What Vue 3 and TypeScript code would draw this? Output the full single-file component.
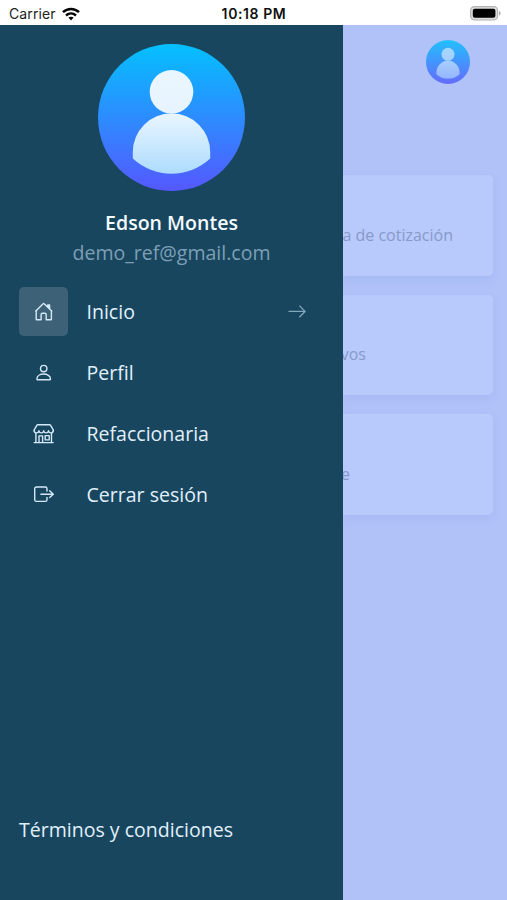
<script setup lang="ts">
interface MenuItem {
  icon: 'home' | 'person' | 'store' | 'exit'
  label: string
  active?: boolean
}

const menu: MenuItem[] = [
  { icon: 'home', label: 'Inicio', active: true },
  { icon: 'person', label: 'Perfil' },
  { icon: 'store', label: 'Refaccionaria' },
  { icon: 'exit', label: 'Cerrar sesión' },
]

const cards = [
  { key: 'quote', text: 'a de cotización' },
  { key: 'active-orders', text: 'vos' },
  { key: 'last', text: 'e' },
]
</script>

<template>
  <div class="screen">
    <header class="status">
      <div class="carrier">
        <span>Carrier</span>
        <svg class="wifi" viewBox="0 0 18 14" fill="none" stroke="#050505" stroke-width="2.5">
          <path d="M1 5.1C5.5.8 12.5.8 17 5.1" />
          <path d="M4 8.5c2.9-2.6 7.1-2.6 10 0" />
          <path d="M6.4 10.6c1.5-1.3 3.7-1.3 5.2 0L9 13.4z" fill="#050505" stroke="none" />
        </svg>
      </div>
      <span class="clock">10:18 PM</span>
      <svg class="battery" viewBox="0 0 31 15">
        <rect x=".6" y=".6" width="27" height="13.4" rx="4" fill="#ddd" stroke="#b4b4b4" stroke-width="1.2" />
        <rect x="2.8" y="2.8" width="22.6" height="9" rx="2" fill="#000" />
        <path d="M29 5c2.1.8 2.1 3.8 0 4.6z" fill="#aaa" />
      </svg>
    </header>

    <div class="body">
      <aside class="drawer">
        <svg class="avatar" viewBox="0 0 147 147">
          <defs>
            <linearGradient id="disc" x1="0" y1="0" x2="0" y2="1">
              <stop offset="0" stop-color="#04c0ff" />
              <stop offset="1" stop-color="#5558ff" />
            </linearGradient>
            <linearGradient id="figure" x1="0" y1="26" x2="0" y2="130" gradientUnits="userSpaceOnUse">
              <stop offset="0" stop-color="#eaf6ff" />
              <stop offset=".45" stop-color="#e6f4ff" />
              <stop offset="1" stop-color="#addcff" />
            </linearGradient>
          </defs>
          <circle cx="73.5" cy="73.5" r="73.5" fill="url(#disc)" />
          <circle cx="73.5" cy="47.8" r="21.8" fill="url(#figure)" />
          <path d="M34.8 108a38.7 38.7 0 0 1 77.4 0v6.6a57 57 0 0 1-77.4 0z" fill="url(#figure)" />
        </svg>
        <div class="name"><span>Edson Montes</span></div>
        <div class="email"><span>demo_ref@gmail.com</span></div>

        <nav class="menu">
          <div v-for="item in menu" :key="item.icon" class="item">
            <div class="tile" :class="{ active: item.active }">
              <svg class="icon" viewBox="0.3 -0.4 22 22">
                <g v-if="item.icon === 'home'">
                  <path d="M3.5 10.3v8.5a.6.6 0 0 0 .6.6h4.3v-5.2a1.4 1.4 0 0 1 1.4-1.4h2.3a1.4 1.4 0 0 1 1.4 1.4v5.2h4.6a.6.6 0 0 0 .6-.6v-8.5" />
                  <path d="M3.2 10.6l7-7.1a1 1 0 0 1 1.5 0l7.3 7.1" />
                  <path d="M15 4.6h1.9v3.5L15 6.3z" fill="#d3e9f7" />
                </g>
                <g v-else-if="item.icon === 'person'">
                  <circle cx="11" cy="7.2" r="3.2" />
                  <path d="M4.2 17.6c0-6.6 13.6-6.6 13.6 0 0 .5-.3.8-.8.8H5c-.5 0-.8-.3-.8-.8z" />
                </g>
                <g v-else-if="item.icon === 'store'">
                  <path d="M5.2 2.3h11.6q.7 0 1.1.6l2.7 4.6v1.2M5.2 2.3q-.7 0-1.1.6L1.5 7.5v1.2" />
                  <path d="M1.5 8.4c.4 2.8 4.1 2.8 4.7 0 .6 2.8 4.2 2.8 4.8 0 .6 2.8 4.2 2.8 4.8 0 .6 2.8 4.3 2.8 4.7 0" />
                  <path d="M3.2 11v9M18.8 11v9M1.5 20.2h19M6.3 20v-6.5h3.6V20M12.5 13.2h4v4.3h-4z" />
                </g>
                <g v-else>
                  <path d="M14.3 7.6V5.3a1.7 1.7 0 0 0-1.7-1.7H3.7A1.7 1.7 0 0 0 2 5.3v11a1.7 1.7 0 0 0 1.7 1.7h8.9a1.7 1.7 0 0 0 1.7-1.7V14" />
                  <path d="M8.2 10.8h12.2M17 7.4l3.6 3.4-3.6 3.4" />
                </g>
              </svg>
            </div>
            <span class="label">{{ item.label }}</span>
            <svg v-if="item.active" class="arrow" viewBox="0 -0.4 18 14">
              <path d="M.5 7h16.6M11.3 1.2L17.1 7l-5.8 5.8" />
            </svg>
          </div>
        </nav>

        <footer class="terms">Términos y condiciones</footer>
      </aside>

      <main class="page">
        <svg class="avatar-small" viewBox="0 0 147 147">
          <circle cx="73.5" cy="73.5" r="73.5" fill="url(#disc)" />
          <g opacity=".66">
            <circle cx="73.5" cy="47.8" r="21.8" fill="url(#figure)" />
            <path d="M34.8 108a38.7 38.7 0 0 1 77.4 0v6.6a57 57 0 0 1-77.4 0z" fill="url(#figure)" />
          </g>
        </svg>
        <section v-for="card in cards" :key="card.key" class="card" :class="card.key">
          <span>{{ card.text }}</span>
        </section>
      </main>
    </div>
  </div>
</template>

<style>
body {
  margin: 0;
  overflow: hidden;
}
</style>

<style scoped>
.screen {
  display: flex;
  flex-direction: column;
  width: 507px;
  height: 900px;
  overflow: hidden;
  background: #fff;
  font-family: 'Open Sans', 'Noto Sans', sans-serif;
}
.status {
  display: grid;
  grid-template-columns: 1fr auto 1fr;
  align-items: center;
  box-sizing: border-box;
  height: 25px;
  padding: 2px 6px 0 9px;
  color: #222;
  font: 14px/20px Inter, sans-serif;
}
.carrier {
  display: flex;
  align-items: center;
  gap: 6px;
  letter-spacing: 0.1px;
}
.wifi {
  width: 18px;
  height: 14px;
}
.clock {
  margin-right: 2px;
  color: #111;
  font-weight: 600;
  letter-spacing: 0.6px;
}
.battery {
  justify-self: end;
  width: 31px;
  height: 15px;
}
.body {
  display: flex;
  flex: 1;
  min-height: 0;
}
.drawer {
  display: flex;
  flex-direction: column;
  box-sizing: border-box;
  width: 343px;
  padding: 18.5px 19px 0;
  background: #19465f;
  color: #e0f0fb;
  font-size: 19.55px;
  line-height: 30px;
}
.avatar {
  align-self: center;
  flex: none;
  width: 147px;
  height: 147px;
}
.name,
.email {
  text-align: center;
}
.name {
  margin-top: 17.5px;
  color: #f4fbff;
  font-weight: 600;
}
.email {
  color: #7c9fb5;
}
.menu {
  display: grid;
  gap: 12px;
  margin-top: 18.7px;
}
.item {
  display: flex;
  align-items: center;
  height: 49px;
}
.tile {
  display: grid;
  place-items: center;
  width: 49px;
  height: 49px;
  margin-right: 18.5px;
  border-radius: 5px;
}
.tile.active {
  background: #3d6176;
}
.icon {
  width: 22px;
  height: 22px;
  fill: none;
  stroke: #d3e9f7;
  stroke-width: 1.4;
  stroke-linecap: round;
  stroke-linejoin: round;
}
.label {
  flex: 1;
  padding-top: 1px;
}
.arrow {
  width: 18px;
  height: 14px;
  margin-right: 18px;
  fill: none;
  stroke: #83a6b8;
  stroke-width: 1.3;
}
.terms {
  margin-top: auto;
  padding-bottom: 55.5px;
}
.page {
  display: flex;
  flex: 1;
  flex-direction: column;
  gap: 19px;
  min-width: 0;
  overflow: hidden;
  padding-right: 14.5px;
  background: #b0c2f8;
}
.avatar-small {
  align-self: flex-end;
  flex: none;
  width: 44px;
  height: 44px;
  margin: 15px 22.5px 72px 0;
  opacity: 0.82;
}
.card {
  display: flex;
  align-items: center;
  justify-content: flex-end;
  box-sizing: border-box;
  height: 100.7px;
  padding-top: 18.6px;
  border-radius: 0 5px 5px 0;
  background: #b8cafc;
  box-shadow: 0 4px 10px rgba(130, 150, 225, 0.2);
  color: #8799c9;
  font-size: 16px;
  line-height: 24px;
  white-space: nowrap;
}
.quote {
  padding-right: 39.5px;
}
.active-orders {
  padding-right: 126.5px;
}
.last {
  padding-right: 142.5px;
}
</style>
